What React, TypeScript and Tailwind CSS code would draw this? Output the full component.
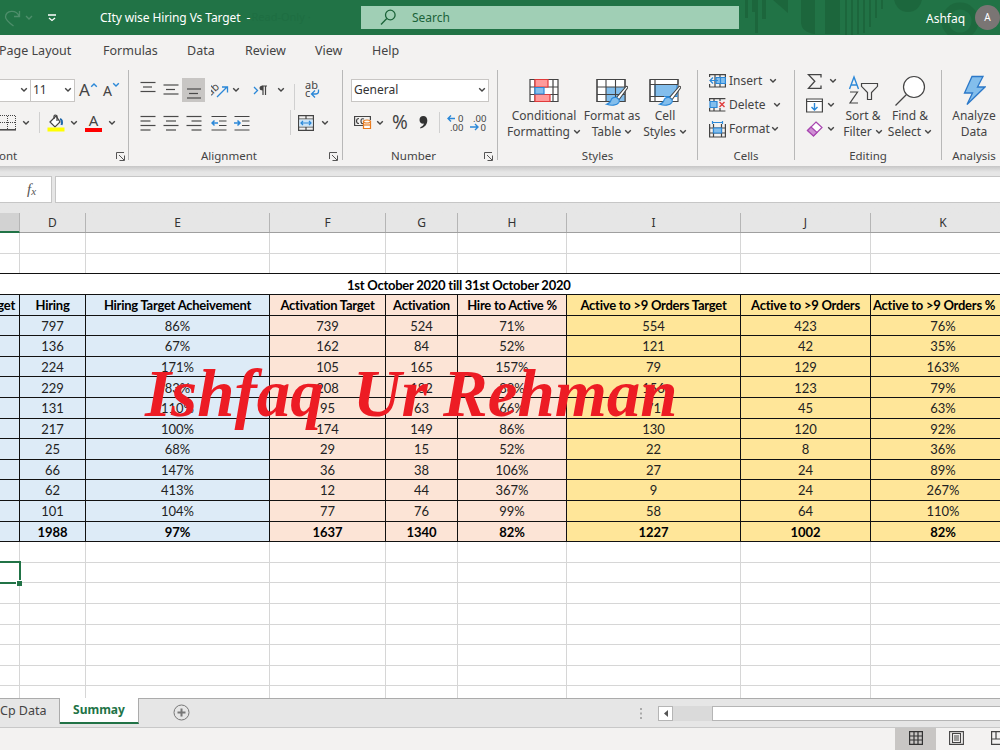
import type { ReactNode } from "react";

const cols = [
  { id: "C", w: "w-[20px]", tone: "bg-[#ddebf7]" },
  { id: "D", w: "w-[66px]", tone: "bg-[#ddebf7]" },
  { id: "E", w: "w-[184px]", tone: "bg-[#ddebf7]" },
  { id: "F", w: "w-[116px]", tone: "bg-[#fce4d6]" },
  { id: "G", w: "w-[72px]", tone: "bg-[#fce4d6]" },
  { id: "H", w: "w-[109px]", tone: "bg-[#fce4d6]" },
  { id: "I", w: "w-[174px]", tone: "bg-[#ffe699]" },
  { id: "J", w: "w-[130px]", tone: "bg-[#ffe699]" },
  { id: "K", w: "w-[145px]", tone: "bg-[#ffe699]" },
];

const headings = [
  "Target",
  "Hiring",
  "Hiring Target Acheivement",
  "Activation Target",
  "Activation",
  "Hire to Active %",
  "Active to >9 Orders Target",
  "Active to >9 Orders",
  "Active to >9 Orders %",
];

const data = [
  ["", "797", "86%", "739", "524", "71%", "554", "423", "76%"],
  ["", "136", "67%", "162", "84", "52%", "121", "42", "35%"],
  ["", "224", "171%", "105", "165", "157%", "79", "129", "163%"],
  ["", "229", "83%", "208", "182", "88%", "156", "123", "79%"],
  ["", "131", "110%", "95", "63", "66%", "71", "45", "63%"],
  ["", "217", "100%", "174", "149", "86%", "130", "120", "92%"],
  ["", "25", "68%", "29", "15", "52%", "22", "8", "36%"],
  ["", "66", "147%", "36", "38", "106%", "27", "24", "89%"],
  ["", "62", "413%", "12", "44", "367%", "9", "24", "267%"],
  ["", "101", "104%", "77", "76", "99%", "58", "64", "110%"],
  ["", "1988", "97%", "1637", "1340", "82%", "1227", "1002", "82%"],
];

function Chevron({ className = "" }: { className?: string }) {
  return (
    <svg className={`h-[6px] w-[8px] shrink-0 ${className}`} viewBox="0 0 8 6" fill="none" stroke="#444" strokeWidth="1.4">
      <path d="M1.2 1.3 4 4.1 6.8 1.3" />
    </svg>
  );
}

function Launcher({ className = "" }: { className?: string }) {
  return (
    <svg className={`h-[9px] w-[10px] shrink-0 ${className}`} viewBox="0 0 10 9" fill="none" stroke="#555">
      <path d="M.5 7V.5H8M3 3l5 5M8.5 3.500V8.500H3.500" />
    </svg>
  );
}

function Lines({ rows, className = "" }: { rows: [number, number, number][]; className?: string }) {
  return (
    <svg className={`h-[18px] w-[16px] shrink-0 ${className}`} viewBox="0 0 16 18" stroke="#4a4a4a" strokeWidth="1.2">
      {rows.map(([x, y, w]) => (
        <path key={y} d={`M${x} ${y}h${w}`} />
      ))}
    </svg>
  );
}

function Sep() {
  return <div className="h-[90px] w-px shrink-0 bg-[#b8b8b8]" />;
}

function Label({ children, className = "" }: { children: ReactNode; className?: string }) {
  return <div className={`flex h-[18px] items-center text-[11.5px] text-[#444] ${className}`}>{children}</div>;
}

function BigButton({ icon, a, b, chevron, className }: { icon: ReactNode; a: string; b: string; chevron?: boolean; className: string }) {
  return (
    <div className={`flex shrink-0 flex-col items-center text-[12px] leading-[16px] text-[#444] ${className}`}>
      <div className="flex h-[38px] items-end justify-center">{icon}</div>
      <div>{a}</div>
      <div className="flex items-center gap-[3px]">
        {b}
        {chevron && <Chevron />}
      </div>
    </div>
  );
}

const Brush = () => (
  <>
    <path d="m30 8.500-9.500 11 2.500 2.200L31.500 10c.6-1-.5-2.300-1.500-1.500Z" fill="#fff" stroke="#444" />
    <path d="M20.500 19.500c-3-.5-5 .7-5.600 3-.5 2-1.900 3-4.400 3.800 4.800 1.500 10.500 1.200 12.300-1.700.7-1.200.6-2 .2-2.900Z" fill="#83beec" stroke="#2b88d8" />
  </>
);

function TitleBar() {
  return (
    <header className="relative flex h-[35px] items-center overflow-hidden bg-[#217346] text-white">
      <svg className="absolute left-[740px] top-0 h-[35px] w-[260px]" viewBox="0 0 260 35" fill="#1b6339">
        <path d="M5 0h3v18H5zM12 0h3v12h-3zM15 0h3v33h-3zM22 0h4v19h-4z M33 0h15v13Z M61 0h14v34q-14-2-14-12ZM85 0h15v34H85z" opacity=".8" />
        <path d="M105 0h2v35h-2zM111 0h2v35h-2zM117 0h2v34h-2zM123 0h2v33h-2zM129 0h2v27h-2zM135 0h2v18h-2zM141 0h2v9h-2z" opacity=".8" />
        <circle cx="168" cy="-2" r="14" opacity=".7" />
        <circle cx="220" cy="21" r="15" fill="none" stroke="#1b6339" strokeWidth="7" opacity=".6" />
      </svg>
      <svg className="ml-[4px] h-[18px] w-[30px] shrink-0" viewBox="0 0 30 18" fill="none" stroke="#4e8e6b" strokeWidth="1.300">
        <path d="M15.500 2v5.500H10M15 7C12 .5 2 1 1.500 8c0 3 4 6 8 9M22 7l3 3 3-3" />
      </svg>
      <svg className="ml-[14px] h-[8px] w-[8px] shrink-0" viewBox="0 0 8 8" fill="none" stroke="#fff" strokeWidth="1.300">
        <path d="M0 1h8M1 4l3 2.500L7 4" />
      </svg>
      <div className="ml-[44px] w-[154px] whitespace-pre text-[12px] tracking-[-0.1px]">CIty wise Hiring Vs Target  -</div>
      <div className="-ml-[2px] w-[110px] text-[11px] text-[#1e6e42]">Read-Only ·</div>
      <div className="relative flex h-[23px] w-[378px] shrink-0 items-center bg-[#a0cfb5] text-[12px] text-[#1b6339]">
        <svg className="ml-[19px] h-[17px] w-[17px]" viewBox="0 0 17 17" fill="none" stroke="#1b6339" strokeWidth="1.300">
          <circle cx="10.300" cy="6" r="4.800" />
          <path d="M6.800 9.500 1 15.500" />
        </svg>
        <span className="ml-[15px]">Search</span>
      </div>
      <div className="relative ml-[187px] w-[49px] shrink-0 pt-[2px] text-[12px]">Ashfaq</div>
      <div className="relative flex h-[25px] w-[25px] shrink-0 items-center justify-center rounded-full bg-[#7a7574] text-[10px]">A</div>
    </header>
  );
}

function FontGroup() {
  return (
    <div className="w-[128px] shrink-0">
      <div className="flex h-[40px] items-center">
        <div className="flex h-[23px] w-[31px] items-center border border-l-0 border-[#c8c6c4] bg-white">
          <Chevron className="ml-[20px]" />
        </div>
        <div className="flex h-[23px] w-[44px] items-center border border-l-0 border-[#c8c6c4] bg-white text-[12px] text-[#333]">
          <span className="ml-[2px] w-[31px]">11</span>
          <Chevron />
        </div>
        <div className="ml-[4px] flex w-[24px] items-center text-[17px] text-[#444]">
          A
          <Chevron className="-mt-[10px] rotate-180 [stroke:#2b88d8]" />
        </div>
        <div className="flex items-center text-[14px] text-[#444]">
          A
          <Chevron className="-mt-[10px] [stroke:#2b88d8]" />
        </div>
      </div>
      <div className="flex h-[25px] items-center">
        <svg className="h-[16px] w-[16px]" viewBox="0 0 16 16" fill="none" stroke="#444">
          <path d="M0 .5h15.500v14M0 7.500h15M7.500 1v13" strokeDasharray="1 1" />
          <path d="M0 14.800h16" strokeWidth="1.500" />
        </svg>
        <Chevron className="ml-[6px]" />
        <div className="ml-[9px] h-[21px] w-px bg-[#d0d0d0]" />
        <svg className="ml-[7px] h-[18px] w-[18px]" viewBox="0 0 18 18" fill="none" stroke="#444" strokeWidth="1.200">
          <path d="m3 8 6-6 4 6-5 5Z" fill="#fff" />
          <path d="M7 5V2q1-2 3 0v5" />
          <path d="M13 5q3 1 1.500 6" stroke="#2269ab" strokeWidth="2" />
          <path d="M.5 15.500h17" stroke="#ffff00" strokeWidth="4" />
        </svg>
        <Chevron className="ml-[5px]" />
        <div className="ml-[7px] flex w-[17px] flex-col items-center text-[15px] leading-[15px] text-[#444]">
          A<div className="h-[4px] w-[17px] bg-[#f00]" />
        </div>
        <Chevron className="ml-[6px]" />
      </div>
      <div className="mt-[12px] flex items-center">
        <Label className="-ml-[7px] w-[123px]">Font</Label>
        <Launcher />
      </div>
    </div>
  );
}

function AlignmentGroup() {
  return (
    <div className="w-[213px] shrink-0">
      <div className="flex h-[40px] items-center">
        <Lines className="ml-[11px]" rows={[[0.5, 1.5, 15], [3, 6, 9], [0.5, 10.5, 15]]} />
        <Lines className="ml-[7px]" rows={[[0.5, 4, 15], [3, 8.5, 9], [0.5, 13, 15]]} />
        <div className="ml-[3px] flex h-[24px] w-[23px] items-center justify-center bg-[#c8c6c4]">
          <Lines rows={[[1, 8, 14], [3, 12.5, 9], [1, 17, 14]]} />
        </div>
        <svg className="ml-[6px] h-[17px] w-[18px]" viewBox="0 0 18 17" fill="none">
          <text x="-3" y="10" fontSize="11" fill="#444" transform="rotate(-43 4 9)">ab</text>
          <path d="m6 15 10-10M11 5h5.500v5.500" stroke="#2b88d8" strokeWidth="1.300" />
        </svg>
        <Chevron className="ml-[3px]" />
        <svg className="ml-[13px] h-[11px] w-[15px]" viewBox="0 0 15 11" fill="none">
          <path d="m1 2 3.500 3.500L1 9" stroke="#2b88d8" strokeWidth="1.300" />
          <path d="M9.500 1h4.500M10 1v9M12.500 1v9" stroke="#444" strokeWidth="1.200" />
          <path d="M10 .5q-3.500 0-3.500 2.500T10 5.500Z" fill="#444" />
        </svg>
        <Chevron className="ml-[9px]" />
        <div className="ml-[9px] mt-[14px] h-[26px] w-px bg-[#d0d0d0]" />
        <svg className="ml-[10px] h-[18px] w-[16px]" viewBox="0 0 16 18" fill="none">
          <text x="0" y="8" fontSize="11" fill="#444">ab</text>
          <text x="0" y="16" fontSize="11" fill="#444">c</text>
          <path d="M13.500 8.500v2q0 2.500-3 2.500H7M10 9.500 6.500 13l3.500 3.500" stroke="#2b88d8" strokeWidth="1.300" />
        </svg>
      </div>
      <div className="flex h-[25px] items-center">
        <Lines className="ml-[11px]" rows={[[0.5, 2.5, 15], [0.5, 7, 10], [0.5, 11.5, 15], [0.5, 16, 10]]} />
        <Lines className="ml-[7px]" rows={[[0.5, 2.5, 15], [3, 7, 10], [0.5, 11.5, 15], [3, 16, 10]]} />
        <Lines className="ml-[7px]" rows={[[0.5, 2.5, 15], [5.5, 7, 10], [0.5, 11.5, 15], [5.5, 16, 10]]} />
        <svg className="ml-[9px] h-[18px] w-[16px]" viewBox="0 0 16 18" fill="none" stroke="#444" strokeWidth="1.200">
          <path d="M.5 2.500h15M8 7h7.500M8 11.500h7.500M.5 16h15" />
          <path d="M7 9H1m2.500-2.500L1 9l2.500 2.500" stroke="#2b88d8" strokeWidth="1.500" />
        </svg>
        <svg className="ml-[7px] h-[18px] w-[16px]" viewBox="0 0 16 18" fill="none" stroke="#444" strokeWidth="1.200">
          <path d="M.5 2.500h15M8 7h7.500M8 11.500h7.500M.5 16h15" />
          <path d="M0 9h6M3.500 6.500 6 9l-2.500 2.500" stroke="#2b88d8" strokeWidth="1.500" />
        </svg>
        <div className="ml-[40px] h-[25px] w-px bg-[#d0d0d0]" />
        <svg className="ml-[7px] h-[16px] w-[16px]" viewBox="0 0 16 16" fill="none" stroke="#444" strokeWidth="1.200">
          <path d="M.6.600h14.800v14.800H.600zM.6 4h15M.6 12h15M8 .6V4M8 12v3.500" />
          <path d="M1.200 4.500h13.600v7H1.200z" fill="#cce4f7" stroke="none" />
          <path d="M3 8h10M5 6 3 8l2 2M11 6l2 2-2 2" stroke="#2b88d8" />
        </svg>
        <Chevron className="ml-[7px]" />
      </div>
      <div className="mt-[12px] flex items-center">
        <Label className="w-[200px] justify-center">Alignment</Label>
        <Launcher />
      </div>
    </div>
  );
}

function NumberGroup() {
  return (
    <div className="w-[154px] shrink-0">
      <div className="flex h-[40px] items-center">
        <div className="ml-[8px] flex h-[23px] w-[138px] items-center border border-[#c8c6c4] bg-white text-[12px] text-[#333]">
          <span className="ml-[2px] w-[124px]">General</span>
          <Chevron />
        </div>
      </div>
      <div className="flex h-[25px] items-center">
        <svg className="ml-[11px] h-[15px] w-[18px]" viewBox="0 0 18 15" fill="none" stroke="#444" strokeWidth="1.200">
          <path d="M9 10.500H.6v-9h15.800V5M5 3.500q-2.500 0-2.500 2.500T5 8.500M10 4q-3-1-3 2t2 2.500" />
          <path d="M9.500 6.500h7v7h-7z" fill="#fff" stroke="#e87b1e" />
          <ellipse cx="13" cy="6.500" rx="3.500" ry="1.500" fill="#fff" stroke="#e87b1e" />
          <path d="M9.500 10h7" stroke="#e87b1e" />
        </svg>
        <Chevron className="ml-[4px]" />
        <span className="ml-[8px] w-[19px] text-[19px] text-[#444]">%</span>
        <svg className="ml-[8px] h-[13px] w-[9px]" viewBox="0 0 9 13" fill="#333">
          <path d="M4.200 0C7 0 8.300 2 8.300 4.500c0 4-2.800 7-7 8V11.300c2-.7 3.300-2 3.600-3.700C2.400 8 .5 6.400.5 4S2 0 4.200 0Z" />
        </svg>
        <div className="ml-[11px] h-[21px] w-px bg-[#d0d0d0]" />
        <svg className="ml-[7px] h-[18px] w-[17px]" viewBox="0 0 17 18" fill="none">
          <path d="M8 4.500H1M4 1.500l-3 3 3 3" stroke="#2b88d8" strokeWidth="1.400" />
          <text x="11" y="8" fontSize="9.500" fill="#444">0</text>
          <text x="3" y="16.500" fontSize="9.500" fill="#444">.00</text>
        </svg>
        <svg className="ml-[6px] h-[18px] w-[17px]" viewBox="0 0 17 18" fill="none">
          <path d="M0 13h8M5 10l3 3-3 3" stroke="#2b88d8" strokeWidth="1.400" />
          <text x="3" y="8" fontSize="9.500" fill="#444">.00</text>
          <text x="10.500" y="16.500" fontSize="9.500" fill="#444">0</text>
        </svg>
      </div>
      <div className="mt-[12px] flex items-center">
        <Label className="w-[141px] justify-center">Number</Label>
        <Launcher />
      </div>
    </div>
  );
}

function StylesGroup() {
  return (
    <div className="w-[199px] shrink-0">
      <div className="flex h-[77px]">
        <BigButton
          className="ml-[7px] w-[78px]"
          a="Conditional"
          b="Formatting"
          chevron
          icon={
            <svg className="mb-[5px] h-[25px] w-[30px]" viewBox="0 0 30 25" fill="none" stroke="#444" strokeWidth="1.200">
              <path d="M1 1.500h28v22H1zM1 9h28M1 16.500h28M6 1.500v22M24 1.500v22" fill="#fff" />
              <path d="M6 1.500h13V9H6zM6 16.500h15v7H6z" fill="#ff9a9a" stroke="#e03b3b" />
              <path d="M6 9.500h9v6.500H6z" fill="#83beec" stroke="#2b88d8" />
            </svg>
          }
        />
        <BigButton
          className="w-[58px]"
          a="Format as"
          b="Table"
          chevron
          icon={
            <svg className="h-[30px] w-[32px]" viewBox="0 0 32 30" fill="none" stroke="#444" strokeWidth="1.100">
              <path d="M1 1.500h28v22H1z" fill="#fff" />
              <path d="M10 9h19v14.500H10z" fill="#83beec" stroke="none" />
              <path d="M1 1.500h28v22H1zM1 9h28M1 16.500h28M10 1.500v22M19.500 1.500v22" />
              <Brush />
            </svg>
          }
        />
        <BigButton
          className="w-[48px]"
          a="Cell"
          b="Styles"
          chevron
          icon={
            <svg className="h-[30px] w-[32px]" viewBox="0 0 32 30" fill="none" stroke="#444" strokeWidth="1.100">
              <path d="M1 1.500h28v22H1z" fill="#fff" />
              <path d="M6 6.500h22v12H6z" fill="#83beec" stroke="#2b88d8" />
              <path d="M1 1.500h28v5M1 1.500v22h14M6 1.500v22M1 6.500h28M1 18.500h14" />
              <Brush />
            </svg>
          }
        />
      </div>
      <Label className="justify-center">Styles</Label>
    </div>
  );
}

function CellsGroup() {
  const row = "flex h-[24px] items-center text-[12px] text-[#444]";
  return (
    <div className="w-[96px] shrink-0">
      <div className="-mt-px h-[78px] pl-[11px]">
        <div className={row}>
          <svg className="h-[16px] w-[17px]" viewBox="0 0 17 16" fill="none" stroke="#444" strokeWidth="1.200">
            <path d="M.6 4V1.600h15.800V14H.600v-3M6 1.600V14M11 1.600V14" />
            <path d="M7 4.500h9.400v6H7z" fill="#83beec" stroke="#2b88d8" />
            <path d="M9 7.500H1m3-3-3 3 3 3M11.500 4.500v6" stroke="#2b88d8" />
          </svg>
          <span className="ml-[3px] w-[40px]">Insert</span>
          <Chevron />
        </div>
        <div className={row}>
          <svg className="h-[16px] w-[17px]" viewBox="0 0 17 16" fill="none" stroke="#444" strokeWidth="1.200">
            <path d="M.6 4V1.600h15.800M.6 11v3h15.800M5 1.600V4M11 1.600V4M5 11v3M11 11v3" />
            <path d="M1 4.500h7v6H1z" fill="#83beec" stroke="#2b88d8" />
            <path d="m10.500 5 5 5m0-5-5 5" stroke="#e03b3b" strokeWidth="1.400" />
          </svg>
          <span className="ml-[3px] w-[44px]">Delete</span>
          <Chevron />
        </div>
        <div className={row}>
          <svg className="h-[17px] w-[17px]" viewBox="0 0 17 17" fill="none" stroke="#444" strokeWidth="1.200">
            <path d="M.6 3v13h15.800V3M.6 7h16M.6 12h16M4.500 3v13M12.500 3v13" />
            <path d="M4.500 7h8v5h-8z" fill="#83beec" stroke="#2b88d8" />
            <path d="M3.500 1.500h10M3.500 0v3M13.500 0v3" stroke="#2b88d8" />
          </svg>
          <span className="ml-[3px] w-[42px]">Format</span>
          <Chevron />
        </div>
      </div>
      <Label className="justify-center">Cells</Label>
    </div>
  );
}

function EditingGroup() {
  return (
    <div className="w-[146px] shrink-0">
      <div className="flex h-[77px]">
        <div className="-mt-px w-[44px] shrink-0 pl-[11px]">
          <div className="flex h-[24px] items-center">
            <svg className="h-[15px] w-[17px]" viewBox="0 0 17 15" fill="none" stroke="#444" strokeWidth="1.300">
              <path d="M15 3.500V.7H2.500l6.300 6.600-6.300 7H15v-2.800" />
            </svg>
            <Chevron className="ml-[6px]" />
          </div>
          <div className="flex h-[24px] items-center">
            <svg className="h-[15px] w-[17px]" viewBox="0 0 17 15" fill="#fff" stroke="#444" strokeWidth="1.200">
              <path d="M.6 1h15.800v13H.600zM.6 3.500h16" />
              <path d="M8.500 5v7M5.500 9l3 3 3-3" fill="none" stroke="#2b88d8" strokeWidth="1.400" />
            </svg>
            <Chevron className="ml-[4px]" />
          </div>
          <div className="flex h-[24px] items-center">
            <svg className="h-[16px] w-[17px]" viewBox="0 0 17 16" fill="#fff" stroke="#a846b0" strokeWidth="1.200">
              <path d="M10 1 16 6.500 7.500 15 1.500 9.500Z" />
              <path d="m5 6 6 5.500L7.500 15l-6-5.500Z" fill="#cf8fd4" />
            </svg>
            <Chevron className="ml-[4px]" />
          </div>
        </div>
        <BigButton
          className="w-[48px]"
          a="Sort &"
          b="Filter"
          chevron
          icon={
            <svg className="mb-[3px] h-[30px] w-[31px]" viewBox="0 0 31 30" fill="none" strokeWidth="1.200">
              <path d="M1.500 14 6 2l4.500 12M3 10h6" stroke="#2b88d8" strokeWidth="1.400" />
              <path d="M2 17h7.500L2 28h8M13.500 8.500h16v2.800l-6 6.200v7h-4v-7l-6-6.200z" stroke="#444" />
            </svg>
          }
        />
        <BigButton
          className="w-[46px]"
          a="Find &"
          b="Select"
          chevron
          icon={
            <svg className="mb-[1px] h-[32px] w-[32px]" viewBox="0 0 32 32" fill="none" stroke="#444" strokeWidth="1.200">
              <circle cx="20" cy="12" r="10.500" fill="#fff" />
              <path d="M12.500 19.500 1.500 30.500" />
            </svg>
          }
        />
      </div>
      <Label className="justify-center">Editing</Label>
    </div>
  );
}

function Ribbon() {
  return (
    <section className="h-[131px] bg-[#f3f2f1]">
      <nav className="flex h-[35px] items-center pb-[3px] text-[12.5px] text-[#444]">
        <span className="-ml-px w-[104px]">Page Layout</span>
        <span className="w-[84px]">Formulas</span>
        <span className="w-[58px]">Data</span>
        <span className="w-[70px]">Review</span>
        <span className="w-[57px]">View</span>
        <span>Help</span>
      </nav>
      <div className="flex h-[95px]">
        <FontGroup />
        <Sep />
        <AlignmentGroup />
        <Sep />
        <NumberGroup />
        <Sep />
        <StylesGroup />
        <Sep />
        <CellsGroup />
        <Sep />
        <EditingGroup />
        <Sep />
        <div className="w-[64px] shrink-0">
          <div className="h-[77px]">
            <BigButton
              className="w-[64px]"
              a="Analyze"
              b="Data"
              icon={
                <svg className="mb-[2px] h-[31px] w-[23px]" viewBox="0 0 23 31" fill="#83beec" stroke="#2b78c8" strokeWidth="1.300">
                  <path d="M9 1.500h11L14.500 12H22L4 29.500 9.500 18H1.500Z" />
                </svg>
              }
            />
          </div>
          <Label className="justify-center">Analysis</Label>
        </div>
      </div>
    </section>
  );
}

function Sheet() {
  const blank = (key: string, black = false) => (
    <div key={key} className={`flex h-[20.6px] border-b ${black ? "border-[#111]" : "border-[#d6d6d6]"}`}>
      {cols.map((c) => (
        <div key={c.id} className={`h-full shrink-0 border-r border-[#d6d6d6] ${c.w}`} />
      ))}
    </div>
  );
  return (
    <main className="relative h-[465px] w-[1016px] bg-white font-['Lato'] text-[13px] text-[#222]">
      <div className="h-full overflow-hidden pt-[0.3px]">
        {blank("r1")}
        {blank("r2", true)}
        <div className="flex h-[20.6px] items-center border-b border-[#111] font-bold text-black">
          <span className="ml-[347px] pt-[2px] tracking-[-0.25px]">1st October 2020 till 31st October 2020</span>
        </div>
        <div className="flex h-[20.6px] font-bold text-black">
          {cols.map((c, i) => (
            <div
              key={c.id}
              className={`flex shrink-0 items-center overflow-hidden whitespace-nowrap border-b border-r border-[#111] pt-[2px] tracking-[-0.25px] ${c.w} ${c.tone} ${
                i === 0 ? "justify-end pr-[4px]" : i === 8 ? "justify-start pl-[2px]" : "justify-center"
              }`}
            >
              {headings[i]}
            </div>
          ))}
        </div>
        {data.map((r, ri) => (
          <div key={ri} className={`flex h-[20.6px] ${ri === 10 ? "font-bold text-black" : ""}`}>
            {cols.map((c, i) => (
              <div key={c.id} className={`flex shrink-0 items-center justify-center border-b border-r border-[#111] pt-[2px] ${c.w} ${c.tone}`}>
                {r[i]}
              </div>
            ))}
          </div>
        ))}
        {["a", "b", "c", "d", "e", "f", "g", "h"].map((k) => blank(k))}
      </div>
      <div className="absolute -left-[4px] top-[328px] h-[23px] w-[25px] border-2 border-[#217346]" />
      <div className="absolute left-[16px] top-[347px] h-[6px] w-[6px] border-l border-t border-white bg-[#217346]" />
      <div className="absolute left-[145px] top-[120px] flex whitespace-nowrap font-['Liberation_Serif'] text-[67px] font-bold italic leading-[80px] text-[#ed1c24]">
        <span className="w-[208px]">Ishfaq</span>
        <span className="w-[90px]">Ur</span>
        <span>Rehman</span>
      </div>
    </main>
  );
}

function Footer() {
  return (
    <footer>
      <div className="flex h-[30px] border-b border-t border-b-[#c8c8c8] border-t-[#ababab] bg-[#e6e6e6] text-[12.5px] text-[#444]">
        <div className="flex h-[25px] w-[60px] items-center border-r border-[#ababab]">Cp Data</div>
        <div className="-mt-px flex h-[26px] w-[79px] items-center justify-center border-b-2 border-r border-b-[#217346] border-r-[#ababab] bg-white text-[12px] font-bold text-[#217346]">Summay</div>
        <svg className="ml-[34px] mt-[5px] h-[17px] w-[17px]" viewBox="0 0 17 17" fill="none" stroke="#777">
          <circle cx="8.500" cy="8.500" r="7.500" />
          <path d="M4.500 8.500h8M8.500 4.500v8" strokeWidth="2" />
        </svg>
        <svg className="ml-[450px] mt-[9px] h-[11px] w-[3px]" viewBox="0 0 3 11" fill="#aaa">
          <path d="M0 0h2v2H0zM0 4.500h2v2H0zM0 9h2v2H0z" />
        </svg>
        <div className="ml-[15px] mt-[7px] flex h-[15px] w-[15px] items-center justify-center border border-[#b5b5b5] bg-white">
          <svg className="h-[7px] w-[4px]" viewBox="0 0 4 7" fill="#555">
            <path d="M4 0v7L0 3.500Z" />
          </svg>
        </div>
        <div className="mt-[7px] h-[15px] w-[39px] bg-[#dadada]" />
        <div className="mt-[7px] h-[15px] flex-1 border border-r-0 border-[#b5b5b5] bg-white" />
      </div>
      <div className="flex h-[22px] justify-end bg-[#f3f2f1]">
        <div className="flex h-[22px] w-[41px] items-start justify-center bg-[#c8c6c4] pt-[3px]">
          <svg className="h-[14px] w-[14px]" viewBox="0 0 14 14" fill="none" stroke="#333" strokeWidth="1.200">
            <path d="M.6.600h12.800v12.800H.600zM5 .6v13M9 .6v13M.6 5h13M.6 9h13" />
          </svg>
        </div>
        <svg className="ml-[13px] mt-[3px] h-[14px] w-[15px]" viewBox="0 0 15 14" fill="none" stroke="#444" strokeWidth="1.100">
          <path d="M.6.600h13.800v12.800H.600zM3.500 2.500h8v9h-8zM5 5h5M5 7h5M5 9h5" />
        </svg>
        <svg className="ml-[27px] mt-[3px] h-[14px] w-[9px]" viewBox="0 0 9 14" fill="none" stroke="#444" strokeWidth="1.200">
          <path d="M9 .6H.600v12.800H9M5 .6V8M.6 8H9" />
        </svg>
      </div>
    </footer>
  );
}

export default function App() {
  return (
    <div className="h-[750px] w-[1000px] overflow-hidden bg-[#e6e6e6] font-['Noto_Sans',sans-serif]">
      <TitleBar />
      <Ribbon />
      <div className="h-[47px] bg-linear-to-b from-[#c6c6c6] to-[#e6e6e6] to-[6px] pt-[10px]">
        <div className="flex h-[27px] gap-[3px]">
          <div className="flex w-[52px] items-center justify-center border border-l-0 border-[#c6c6c6] bg-white pl-[12px] font-['Liberation_Serif'] text-[15px] italic text-[#555]">
            f<span className="pt-[3px] text-[11px]">x</span>
          </div>
          <div className="flex-1 border border-r-0 border-[#c6c6c6] bg-white" />
        </div>
      </div>
      <div className="flex h-[20px] w-[1016px] border-b border-[#9f9f9f] text-[12px] text-[#333]">
        {cols.map((c) => (
          <div
            key={c.id}
            className={`flex shrink-0 items-center justify-center border-r border-[#b5b5b5] ${c.w} ${c.id === "C" ? "h-[20px] border-b-2 border-b-[#217346] bg-[#d2d2d2]" : "h-full"}`}
          >
            {c.id === "C" ? "" : c.id}
          </div>
        ))}
      </div>
      <Sheet />
      <Footer />
    </div>
  );
}
